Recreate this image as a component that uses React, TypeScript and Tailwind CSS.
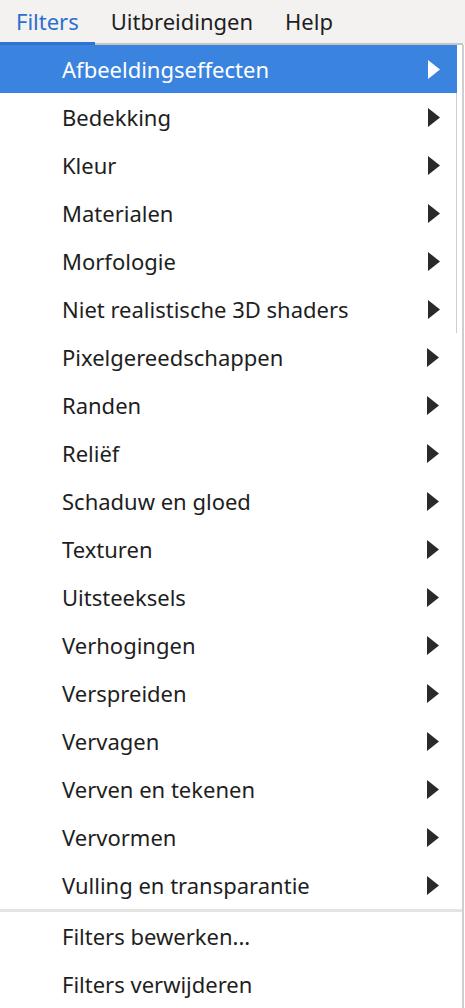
const items = [
  "Afbeeldingseffecten",
  "Bedekking",
  "Kleur",
  "Materialen",
  "Morfologie",
  "Niet realistische 3D shaders",
  "Pixelgereedschappen",
  "Randen",
  "Reliëf",
  "Schaduw en gloed",
  "Texturen",
  "Uitsteeksels",
  "Verhogingen",
  "Verspreiden",
  "Vervagen",
  "Verven en tekenen",
  "Vervormen",
  "Vulling en transparantie",
];

function Arrow({ active }: { active: boolean }) {
  return (
    <svg width="12" height="19" viewBox="0 0 12 19" className={active ? "fill-white" : "fill-[#2a2a2a]"}>
      <path d="M0 0 L12 9.5 L0 19 Z" />
    </svg>
  );
}

function Row({ label, active = false, pr }: { label: string; active?: boolean; pr: string }) {
  return (
    <div className={`h-[48px] flex items-center pl-[62px] ${pr} ${active ? "bg-[#3a84df] text-white" : ""}`}>
      <span className="flex-1">{label}</span>
      <Arrow active={active} />
    </div>
  );
}

export default function App() {
  return (
    <div className="w-[465px] h-[1008px] bg-white overflow-hidden text-[#1e1e1e]" style={{ fontFamily: '"Noto Sans", sans-serif' }}>
      {/* Menu bar */}
      <div className="h-[45px] bg-[#f3f2f1] flex items-end text-[22px]">
        <div className="h-full flex flex-col">
          <span className="flex-1 flex items-center px-[16px] text-[#2b6fd0]">Filters</span>
          <div className="h-[3px] bg-[#2f73d4]" />
        </div>
        <div className="h-full flex-1 flex flex-col">
          <div className="flex-1 flex items-center">
            <span className="px-[16px]">Uitbreidingen</span>
            <span className="px-[16px]">Help</span>
          </div>
          <div className="h-[2px] bg-[#c6c6c6] mr-[2px]" />
        </div>
      </div>

      {/* Dropdown */}
      <div className="w-[464px] border-r-2 border-[#cfcfcf] text-[22px]">
        <div className="mr-[5px]">
          <Row label={items[0]} active pr="pr-[17px]" />
          <div className="border-r border-[#cfcfcf]">
            {items.slice(1, 6).map((label) => (
              <Row key={label} label={label} pr="pr-[16px]" />
            ))}
          </div>
        </div>
        {items.slice(6).map((label) => (
          <Row key={label} label={label} pr="pr-[23px]" />
        ))}
        <div className="h-[3px] bg-[#e4e4e4]" />
        <div className="h-[48px] flex items-center pl-[62px]">Filters bewerken...</div>
        <div className="h-[48px] flex items-center pl-[62px]">Filters verwijderen</div>
      </div>
    </div>
  );
}
